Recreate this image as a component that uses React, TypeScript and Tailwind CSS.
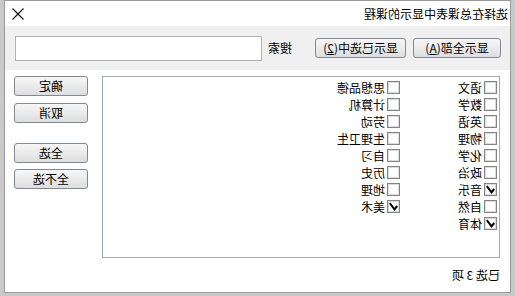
import React from "react";

const font = { fontFamily: '"Noto Sans CJK SC", "Noto Sans", sans-serif' };

function Btn({ children, w }: { children: React.ReactNode; w: string }) {
  return (
    <div
      className={`${w} h-[20px] flex items-center justify-center rounded-[3px] border border-[#7f8a96] bg-gradient-to-b from-[#f7f7f7] to-[#dedede] text-[12px] leading-none text-black`}
    >
      {children}
    </div>
  );
}

function Check({ label, checked }: { label: string; checked?: boolean }) {
  return (
    <div className="h-[17px] flex items-center gap-[2px]">
      <div className="w-[13px] h-[13px] border border-[#848484] bg-white flex items-center justify-center">
        <div className="w-[11px] h-[11px] border border-[#dcdcdc] flex items-center justify-center">
          {checked && (
            <svg width="9" height="9" viewBox="0 0 9 9">
              <path d="M0.8 4 L3.5 7.3 L8.2 1.2" fill="none" stroke="#000" strokeWidth="2" />
            </svg>
          )}
        </div>
      </div>
      <span className="text-[12px] leading-none text-black">{label}</span>
    </div>
  );
}

export default function App() {
  const col1: [string, boolean][] = [
    ["语文", false],
    ["数学", false],
    ["英语", false],
    ["物理", false],
    ["化学", false],
    ["政治", false],
    ["音乐", true],
    ["自然", false],
    ["体育", true],
  ];
  const col2: [string, boolean][] = [
    ["思想品德", false],
    ["计算机", false],
    ["劳动", false],
    ["生理卫生", false],
    ["自习", false],
    ["历史", false],
    ["地理", false],
    ["美术", true],
  ];
  return (
    <div
      className="w-[515px] h-[296px] bg-[#c9c9c9] flex [transform:scaleX(-1)] overflow-hidden"
      style={font}
    >
      <div className="ml-[4px] w-[507px] h-[293px] border border-[#9a9a9a] bg-white flex flex-col">
        <div className="h-[25px] flex items-center justify-between pl-[2px] pr-[7px]">
          <span className="text-[12px] leading-none text-black">选择在总课表中显示的课程</span>
          <svg width="12" height="12" viewBox="0 0 12 12">
            <path d="M0.5 0.5 L11.5 11.5 M11.5 0.5 L0.5 11.5" stroke="#111" strokeWidth="1.2" />
          </svg>
        </div>
        <div className="h-[44px] bg-[#f0f0f0] flex items-center pl-[9px]">
          <Btn w="w-[88px]">显示全部(<span className="underline">A</span>)</Btn>
          <div className="w-[7px]" />
          <Btn w="w-[91px]">显示已选中(<span className="underline">2</span>)</Btn>
          <span className="ml-[23px] text-[12px] leading-none text-black">搜索</span>
          <div className="ml-[6px] w-[247px] h-[25px] border border-[#a9b3bc] bg-white" />
        </div>
        <div className="flex pl-[10px] pt-[6px]">
          <div className="flex flex-col">
            <div className="w-[398px] h-[182px] border border-[#a4abb2] flex pl-[2px] pt-[2px]">
              <div className="w-[97px] flex flex-col">
                {col1.map(([l, c]) => (
                  <Check key={l} label={l} checked={c} />
                ))}
              </div>
              <div className="flex flex-col">
                {col2.map(([l, c]) => (
                  <Check key={l} label={l} checked={c} />
                ))}
              </div>
            </div>
            <div className="mt-[11px] text-[12px] leading-none text-black">已选 3 项</div>
          </div>
          <div className="ml-[14px] flex flex-col">
            <Btn w="w-[74px]">确定</Btn>
            <div className="h-[7px]" />
            <Btn w="w-[74px]">取消</Btn>
            <div className="h-[20px]" />
            <Btn w="w-[74px]">全选</Btn>
            <div className="h-[6px]" />
            <Btn w="w-[74px]">全不选</Btn>
          </div>
        </div>
      </div>
    </div>
  );
}
